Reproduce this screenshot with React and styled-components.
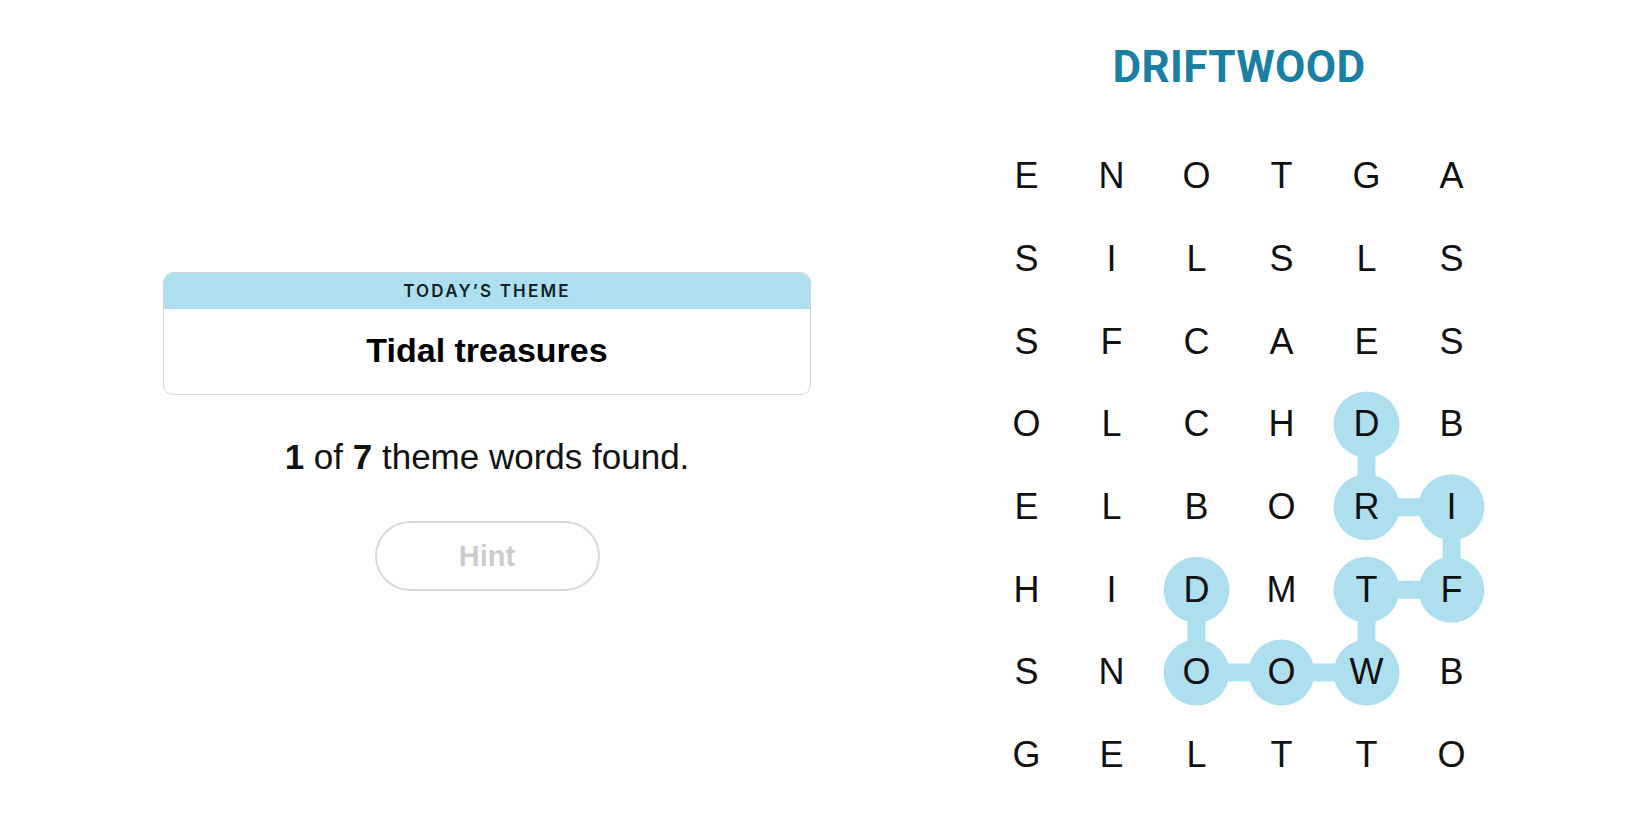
import styled, { createGlobalStyle } from "styled-components";

const GlobalStyle = createGlobalStyle`
  html, body {
    margin: 0;
    padding: 0;
    background: #fff;
  }
  body {
    font-family: "Liberation Sans", Arial, sans-serif;
    color: #000;
  }
`;

const COLS = 6;
const CELL_W = 85;
const CELL_H = 82.7;

const letters = [
  "ENOTGA",
  "SILSLS",
  "SFCAES",
  "OLCHDB",
  "ELBORI",
  "HIDMTF",
  "SNOOWB",
  "GELTTO",
];

// the found word, in order of the path
const found = [
  [3, 4],
  [4, 4],
  [4, 5],
  [5, 5],
  [5, 4],
  [6, 4],
  [6, 3],
  [6, 2],
  [5, 2],
];

const cx = (c) => CELL_W / 2 + CELL_W * c;
const cy = (r) => CELL_H / 2 + CELL_H * r;

export default function App() {
  return (
    <>
      <GlobalStyle />
      <Page>
        <LeftPanel>
          <ThemeCard>
            <ThemeHeader>TODAY’S THEME</ThemeHeader>
            <ThemeBody>Tidal treasures</ThemeBody>
          </ThemeCard>
          <Progress>
            <b>1</b> of <b>7</b> theme words found.
          </Progress>
          <HintButton disabled>Hint</HintButton>
        </LeftPanel>

        <RightPanel>
          <Title>DRIFTWOOD</Title>
          <Board>
            <PathLayer
              width={CELL_W * COLS}
              height={CELL_H * letters.length}
              viewBox={`0 0 ${CELL_W * COLS} ${CELL_H * letters.length}`}
            >
              {found.slice(1).map(([r, c], i) => {
                const [pr, pc] = found[i];
                return (
                  <line
                    key={`l${i}`}
                    x1={cx(pc)}
                    y1={cy(pr)}
                    x2={cx(c)}
                    y2={cy(r)}
                    stroke="#aedfee"
                    strokeWidth="18"
                  />
                );
              })}
              {found.map(([r, c], i) => (
                <circle key={`c${i}`} cx={cx(c)} cy={cy(r)} r="33" fill="#aedfee" />
              ))}
            </PathLayer>
            {letters.map((row, r) =>
              row.split("").map((ch, c) => <Letter key={`${r}-${c}`}>{ch}</Letter>)
            )}
          </Board>
        </RightPanel>
      </Page>
    </>
  );
}

const Page = styled.main`
  display: grid;
  grid-template-columns: 974px 530px;
  min-height: 825px;
`;

const LeftPanel = styled.section`
  display: flex;
  flex-direction: column;
  align-items: center;
  padding-top: 272px;
`;

const ThemeCard = styled.div`
  width: 648px;
  border: 1.5px solid #d4d4d4;
  border-radius: 10px;
  overflow: hidden;
  box-sizing: border-box;
`;

const ThemeHeader = styled.div`
  height: 36px;
  background: #aedfee;
  display: flex;
  align-items: center;
  justify-content: center;
  font-family: "Inter", "Liberation Sans", sans-serif;
  font-weight: 600;
  font-size: 17px;
  letter-spacing: 2.2px;
  color: #121f26;
`;

const ThemeBody = styled.div`
  height: 85px;
  display: flex;
  align-items: center;
  justify-content: center;
  font-weight: 700;
  font-size: 34px;
  color: #000;
  padding-bottom: 3px;
  box-sizing: border-box;
`;

const Progress = styled.p`
  margin: 42px 0 0;
  font-size: 35px;
  line-height: 40px;
  color: #121212;

  b {
    font-weight: 700;
  }
`;

const HintButton = styled.button`
  margin-top: 44px;
  width: 225px;
  height: 70px;
  border: 2px solid #d9d9d9;
  border-radius: 35px;
  background: #fff;
  font-family: "Liberation Sans", Arial, sans-serif;
  font-weight: 700;
  font-size: 29px;
  color: #cccccc;
  cursor: default;
`;

const RightPanel = styled.section`
  display: flex;
  flex-direction: column;
  align-items: center;
  padding-top: 40px;
`;

const Title = styled.h1`
  margin: 0;
  font-family: "Roboto", "Liberation Sans", sans-serif;
  font-weight: 700;
  font-size: 44px;
  line-height: 54px;
  letter-spacing: 0.4px;
  color: #1a7fa2;
`;

const Board = styled.div`
  position: relative;
  margin-top: 41px;
  display: grid;
  grid-template-columns: repeat(${COLS}, ${CELL_W}px);
  grid-template-rows: repeat(${letters.length}, ${CELL_H}px);
`;

const PathLayer = styled.svg`
  position: absolute;
  inset: 0;
  pointer-events: none;
`;

const Letter = styled.span`
  position: relative;
  display: flex;
  align-items: center;
  justify-content: center;
  font-family: "Liberation Sans", Arial, sans-serif;
  font-size: 36px;
  color: #111;
`;
